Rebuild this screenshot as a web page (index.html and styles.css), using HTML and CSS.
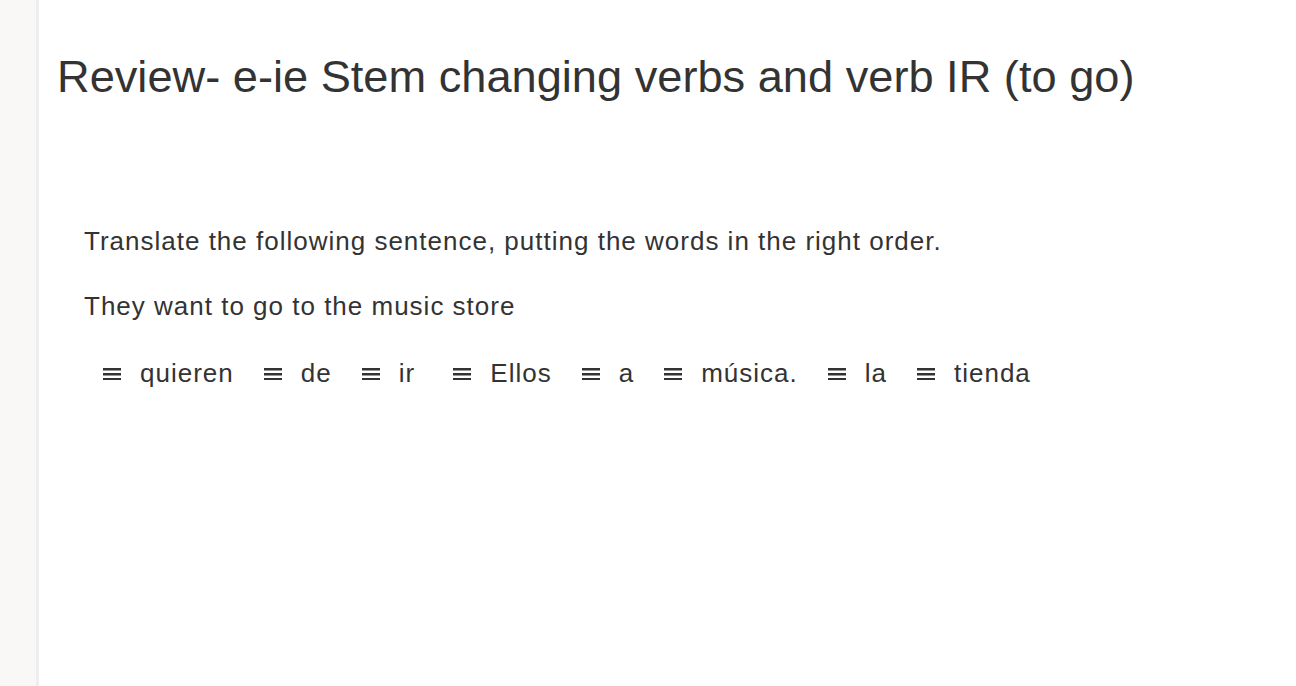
FILE: index.html
```html
<!DOCTYPE html>
<html>
<head>
<meta charset="utf-8">
<link rel="stylesheet" href="styles.css">
</head>
<body>
<div class="layout">
  <aside class="sidebar"></aside>
  <main class="main">
    <h1 class="title">Review- e-ie Stem changing verbs and verb IR (to go)</h1>
    <section class="question">
      <p class="prompt">Translate the following sentence, putting the words in the right order.</p>
      <p class="sentence">They want to go to the music store</p>
      <ul class="tiles">
        <li class="tile"><span class="grip"></span><span class="word">quieren</span></li>
        <li class="tile"><span class="grip"></span><span class="word">de</span></li>
        <li class="tile"><span class="grip"></span><span class="word">ir&nbsp;</span></li>
        <li class="tile"><span class="grip"></span><span class="word">Ellos</span></li>
        <li class="tile"><span class="grip"></span><span class="word">a</span></li>
        <li class="tile"><span class="grip"></span><span class="word">música.</span></li>
        <li class="tile"><span class="grip"></span><span class="word">la</span></li>
        <li class="tile"><span class="grip"></span><span class="word">tienda</span></li>
      </ul>
    </section>
  </main>
</div>
</body>
</html>
```
FILE: styles.css
```css
html, body {
  margin: 0;
  padding: 0;
  height: 100%;
  background: #ffffff;
}
body {
  font-family: "Liberation Sans", Arial, Helvetica, sans-serif;
  color: #333333;
}
.layout {
  display: flex;
  min-height: 100%;
}
.sidebar {
  width: 36px;
  flex: 0 0 36px;
  background: #f9f8f6;
  border-right: 3px solid #eeeeee;
}
.main {
  flex: 1;
  padding: 0 0 0 18px;
}
.title {
  margin: 51px 0 0 0;
  font-size: 45.2px;
  font-weight: normal;
  line-height: 52px;
  letter-spacing: 0;
}
.question {
  padding-left: 27px;
  margin-top: 123px;
}
.prompt, .sentence {
  margin: 0;
  font-size: 26px;
  line-height: 30px;
  letter-spacing: 1px;
}
.sentence {
  margin-top: 35px;
}
.tiles {
  list-style: none;
  margin: 36px 0 0 0;
  padding: 0 0 0 19px;
  display: flex;
  gap: 30px;
}
.tile {
  display: flex;
  align-items: center;
  gap: 19px;
  font-size: 26px;
  line-height: 32px;
  letter-spacing: 1px;
  white-space: pre;
}
.grip {
  width: 18px;
  height: 12px;
  background:
    linear-gradient(#333 0 0) 0 0 / 100% 2.5px no-repeat,
    linear-gradient(#333 0 0) 0 50% / 100% 2.5px no-repeat,
    linear-gradient(#333 0 0) 0 100% / 100% 2.5px no-repeat;
  margin-top: 2px;
}
```
